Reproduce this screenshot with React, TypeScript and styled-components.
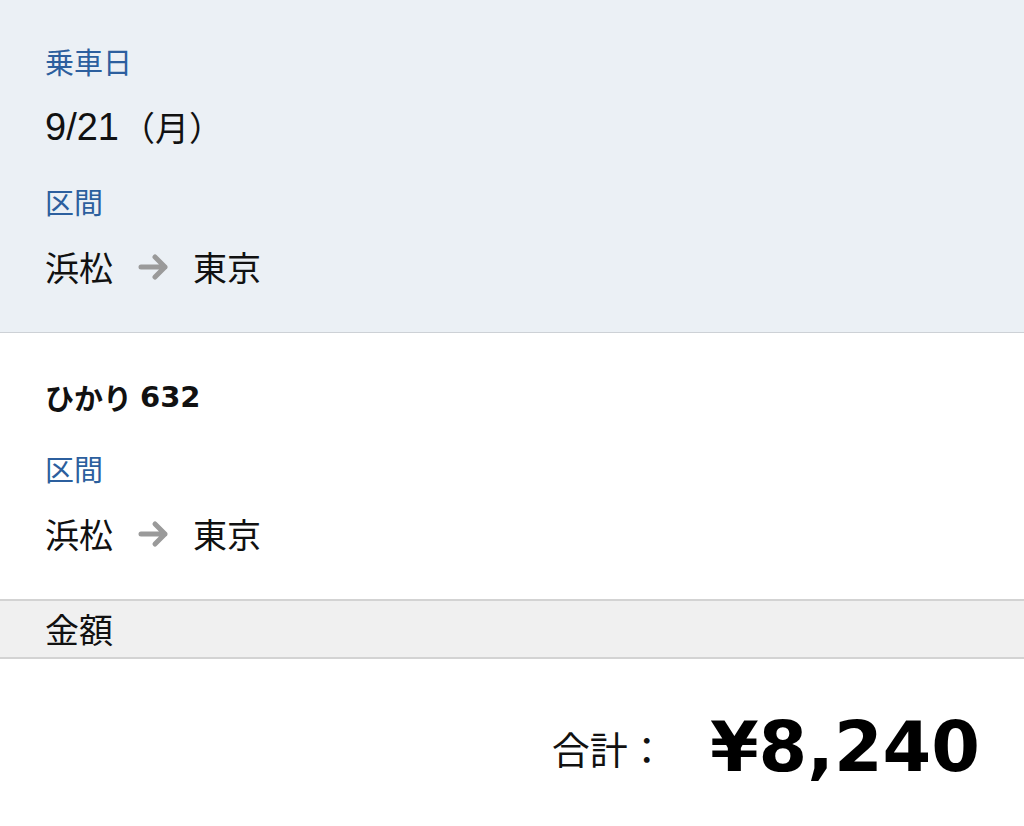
import styled, { createGlobalStyle } from 'styled-components'

const GlobalStyle = createGlobalStyle`
  html, body {
    margin: 0;
    padding: 0;
    background: #fff;
  }
  body {
    font-family: 'Liberation Sans', 'Noto Sans CJK JP', sans-serif;
    color: #111;
  }
`

const Route = ({ from, to }: { from: string; to: string }) => (
  <Value>
    <span>{from}</span>
    <Arrow viewBox="0 0 34 30">
      <path
        d="M4 15 H28 M18 5 L28 15 L18 25"
        fill="none"
        stroke="#9a9a9a"
        strokeWidth="5"
        strokeLinecap="round"
        strokeLinejoin="round"
      />
    </Arrow>
    <span>{to}</span>
  </Value>
)

export default () => {
  return (
    <Page>
      <GlobalStyle />
      <Summary>
        <Field>
          <Label>乗車日</Label>
          <Value>
            <Digits>9/21</Digits>
            <span>（月）</span>
          </Value>
        </Field>
        <Field>
          <Label>区間</Label>
          <Route from="浜松" to="東京" />
        </Field>
      </Summary>
      <Train>
        <TrainName>
          ひかり <TrainNo>632</TrainNo>
        </TrainName>
        <Field>
          <Label>区間</Label>
          <Route from="浜松" to="東京" />
        </Field>
      </Train>
      <SectionHeader>金額</SectionHeader>
      <Total>
        <TotalLabel>合計：</TotalLabel>
        <TotalPrice>¥8,240</TotalPrice>
      </Total>
    </Page>
  )
}

const Page = styled.div`
  width: 1024px;
  height: 826px;
  overflow: hidden;
  background: #fff;
`

const Summary = styled.section`
  background: #ebf0f5;
  padding: 40px 45px 39px;
  display: flex;
  flex-direction: column;
  gap: 27px;
  border-bottom: 1px solid #cdd1d6;
`

const Train = styled.section`
  padding: 43px 45px 39px;
  display: flex;
  flex-direction: column;
  gap: 29px;
`

const Field = styled.div`
  display: flex;
  flex-direction: column;
  gap: 19px;
`

const Label = styled.div`
  font-size: 29px;
  line-height: 42px;
  color: #2c5f9e;
  font-family: 'Noto Sans CJK JP', sans-serif;
`

const Value = styled.div`
  display: flex;
  align-items: center;
  font-size: 34px;
  line-height: 52px;
  height: 52px;
  color: #111;
  span {
    font-family: 'Noto Sans CJK JP', sans-serif;
  }
`

const Digits = styled.b`
  font-weight: 400;
  font-size: 38px;
  font-family: 'Liberation Sans', sans-serif;
  margin-right: 2px;
`

const Arrow = styled.svg`
  width: 34px;
  height: 30px;
  margin: 0 22px 0 24px;
  flex: 0 0 auto;
`

const TrainName = styled.div`
  display: flex;
  align-items: center;
  gap: 8px;
  height: 42px;
  font-size: 29px;
  font-weight: 700;
  color: #111;
  font-family: 'Noto Sans CJK JP', sans-serif;
`

const TrainNo = styled.span`
  font-family: 'DejaVu Sans', sans-serif;
  font-weight: 700;
  font-size: 29px;
`

const SectionHeader = styled.div`
  background: #f0f0f0;
  border-top: 2px solid #d3d3d3;
  border-bottom: 2px solid #d3d3d3;
  height: 56px;
  line-height: 56px;
  padding: 0 45px;
  font-size: 34px;
  font-family: 'Noto Sans CJK JP', sans-serif;
  color: #111;
`

const Total = styled.div`
  display: flex;
  justify-content: flex-end;
  align-items: center;
  padding: 48px 44px 0 0;
  height: 80px;
`

const TotalLabel = styled.span`
  font-size: 38px;
  font-family: 'Noto Sans CJK JP', sans-serif;
  color: #111;
  margin-right: 44px;
`

const TotalPrice = styled.span`
  font-size: 70px;
  font-weight: 700;
  color: #000;
  font-family: 'DejaVu Sans', sans-serif;
`
